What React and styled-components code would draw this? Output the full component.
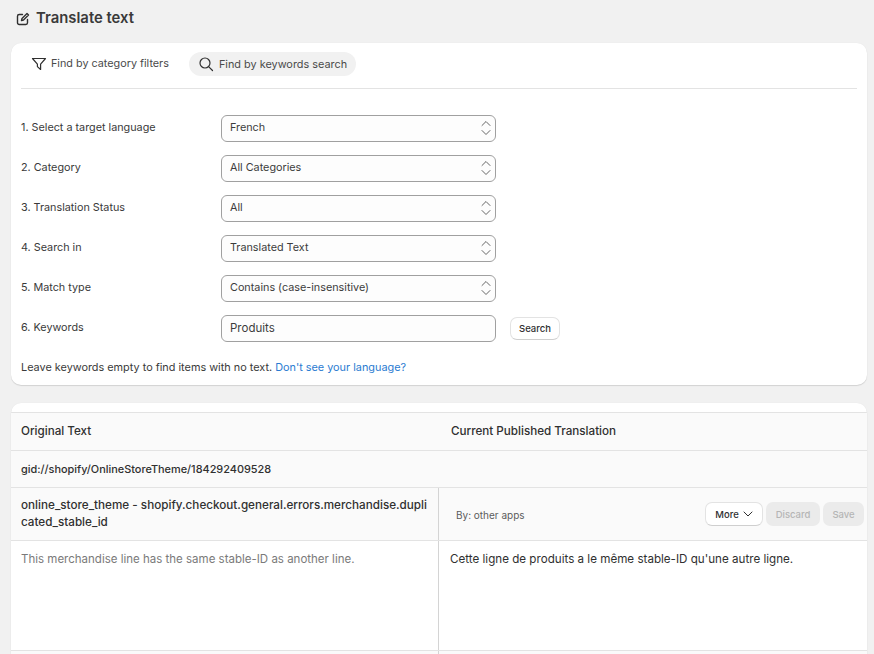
import React from "react";
import styled, { createGlobalStyle } from "styled-components";

const Global = createGlobalStyle`
  html, body { margin: 0; padding: 0; background: #f1f1f1; }
  body { width: 874px; height: 654px; overflow: hidden; font-family: Inter, "Liberation Sans", sans-serif; color: #303030; font-size: 10.8px; }
  * { box-sizing: border-box; }
`;
const Page = styled.div`
  padding: 0 7px 0 11px;
  height: 654px;
  overflow: hidden;
`;
const TitleRow = styled.div`
  height: 43px;
  padding: 5px 0 0 5px;
  display: flex;
  align-items: flex-start;
  gap: 6px;
`;
const TitleIcon = styled.svg`
  width: 14px;
  height: 14px;
  margin-top: 7px;
  flex: none;
`;
const Title = styled.h1`
  margin: 0;
  font-size: 14.85px;
  line-height: 26px;
  font-weight: 600;
  color: #3a3a3a;
`;
const Card = styled.section`
  background: #fff;
  border-radius: 10px;
  box-shadow: 0 1px 1px rgba(0,0,0,.12), 0 0 1px rgba(0,0,0,.08);
`;
const FilterCard = styled(Card)`
  height: 342px;
  padding: 9px 10px 0;
`;
const Tabs = styled.div`
  display: flex;
  align-items: center;
  gap: 10px;
  height: 24px;
`;
const Tab = styled.div`
  display: flex;
  align-items: center;
  gap: ${p => (p.$active ? 5 : 4)}px;
  height: 24px;
  padding: 0 ${p => (p.$active ? 9 : 10)}px 1px;
  border-radius: 12px;
  font-size: ${p => (p.$active ? 10.88 : 10.8)}px;
  color: #4a4a4a;
  background: ${p => (p.$active ? "#f1f1f1" : "transparent")};
`;
const TabIcon = styled.svg`
  width: 16px;
  height: 16px;
  flex: none;
`;
const Divider = styled.hr`
  margin: 12px 0 0;
  width: 836px;
  border: 0;
  border-top: 1px solid #e3e3e3;
`;
const Form = styled.div`
  margin-top: 25px;
  display: flex;
  flex-direction: column;
  gap: 12px;
`;
const Row = styled.div`
  display: flex;
  align-items: center;
  height: 28px;
`;
const Label = styled.div`
  width: 200px;
  padding-bottom: 2px;
  font-size: 10.8px;
  color: #3a3a3a;
`;
const Control = styled.div`
  width: 275px;
  height: 27px;
  border: 1px solid #a0a0a0;
  border-radius: 6px;
  background: #fdfdfd;
  padding: 0 8px 2px;
  display: flex;
  align-items: center;
  justify-content: space-between;
  font-size: 10.8px;
  color: #3c3c3c;
`;
const TextValue = styled(Control)`
  font-size: 11.5px;
  padding-bottom: 0;
`;
const Chevrons = styled.svg`
  width: 12px;
  height: 16px;
  margin: 2px -5px 0 0;
  flex: none;
`;
const SearchButton = styled.button`
  margin-left: 14px;
  width: 50px;
  height: 23px;
  border: 1px solid #e3e3e3;
  border-bottom-color: #cfcfcf;
  border-radius: 7px;
  background: #fff;
  font: 500 9.5px Inter, "Liberation Sans", sans-serif;
  color: #303030;
  padding: 0;
`;
const Help = styled.p`
  margin: 18px 0 0;
  font-size: 10.87px;
  color: #3a3a3a;
`;
const HelpLink = styled.a`
  color: #2a7bd1;
`;
const TableCard = styled(Card)`
  margin-top: 18px;
  padding-top: 9px;
  border-radius: 10px 10px 0 0;
  overflow: hidden;
`;
const GridRow = styled.div`
  display: grid;
  grid-template-columns: 427px 1fr;
  border-top: 1px solid #e3e3e3;
  height: ${p => p.$h}px;
  background: ${p => (p.$white ? "#fff" : "#fafafa")};
`;
const Cell = styled.div`
  padding: 0 10px;
  display: flex;
  align-items: center;
  min-width: 0;
  font-size: 10.9px;
  font-weight: 500;
  color: #303030;
`;
const SpanCell = styled(Cell)`
  grid-column: 1 / -1;
`;
const HeaderCell = styled(Cell)`
  padding: 0 10px 2px ${p => p.$pl ?? 10}px;
  font-size: 11.65px;
`;
const KeyCell = styled(Cell)`
  word-break: break-all;
  line-height: 17px;
  font-size: 11.7px;
  padding-right: 8px;
`;
const ActionCell = styled.div`
  border-left: 1px solid #d4d4d4;
  display: flex;
  align-items: center;
  justify-content: space-between;
  padding: 0 3px 0 17px;
`;
const ByLine = styled.span`
  font-size: 10px;
  color: #5c5c5c;
  margin-top: 1px;
`;
const Actions = styled.div`
  display: flex;
  gap: 3px;
`;
const MoreButton = styled.button`
  width: 58px;
  height: 24px;
  padding: 0;
  border: 1px solid #e3e3e3;
  border-bottom-color: #cfcfcf;
  border-radius: 7px;
  background: #fff;
  font: 500 9.5px Inter, "Liberation Sans", sans-serif;
  color: #303030;
  display: flex;
  align-items: center;
  justify-content: center;
  gap: 4px;
`;
const DisabledButton = styled.button`
  width: ${p => p.$w}px;
  height: 24px;
  padding: 0;
  border: 0;
  border-radius: 7px;
  background: #ebebeb;
  font: 500 9.5px Inter, "Liberation Sans", sans-serif;
  color: #b5b5b5;
`;
const SourceText = styled.div`
  padding: 11px 10px;
  font-size: 11.5px;
  color: #7a7a7a;
`;
const TargetText = styled.div`
  border-left: 1px solid #d4d4d4;
  padding: 11px 11px;
  font-size: 11.63px;
  color: #303030;
`;

const Updown = () => (
  <Chevrons viewBox="0 0 12 16" fill="none" stroke="#666" strokeWidth="1" strokeLinecap="round" strokeLinejoin="round">
    <path d="M2 5.5 6 1.5l4 4" />
    <path d="M2 10.5 6 14.5l4-4" />
  </Chevrons>
);

const selects = [
  ["1. Select a target language", "French"],
  ["2. Category", "All Categories"],
  ["3. Translation Status", "All"],
  ["4. Search in", "Translated Text"],
  ["5. Match type", "Contains (case-insensitive)"],
];

export default function App() {
  return (
    <Page>
      <Global />
      <TitleRow>
        <TitleIcon viewBox="0 0 14 14" fill="none" stroke="#303030" strokeWidth="1.4" strokeLinecap="round" strokeLinejoin="round">
          <path d="M6.5 2.5H3.2A1.7 1.7 0 0 0 1.5 4.2v6.6a1.7 1.7 0 0 0 1.7 1.7h6.6a1.7 1.7 0 0 0 1.7-1.7V7.5" />
          <path d="M11 1.5 12.5 3 7.5 8l-2 .5.5-2z" />
        </TitleIcon>
        <Title>Translate text</Title>
      </TitleRow>

      <FilterCard>
        <Tabs>
          <Tab>
            <TabIcon viewBox="0 0 16 16" fill="none" stroke="#303030" strokeWidth="1.2" strokeLinejoin="round">
              <path d="M1.5 2.5h13L9.6 8.2v5.3L6.4 10.6V8.2z" />
            </TabIcon>
            Find by category filters
          </Tab>
          <Tab $active>
            <TabIcon viewBox="0 0 16 16" fill="none" stroke="#303030" strokeWidth="1.2" strokeLinecap="round">
              <circle cx="7" cy="7" r="5" />
              <path d="m10.6 10.6 3.9 3.9" />
            </TabIcon>
            Find by keywords search
          </Tab>
        </Tabs>
        <Divider />
        <Form>
          {selects.map(([label, value]) => (
            <Row key={label}>
              <Label>{label}</Label>
              <Control>
                {value}
                <Updown />
              </Control>
            </Row>
          ))}
          <Row>
            <Label>6. Keywords</Label>
            <TextValue>Produits</TextValue>
            <SearchButton>Search</SearchButton>
          </Row>
        </Form>
        <Help>
          Leave keywords empty to find items with no text. <HelpLink>Don't see your language?</HelpLink>
        </Help>
      </FilterCard>

      <TableCard>
        <GridRow $h={38}>
          <HeaderCell>Original Text</HeaderCell>
          <HeaderCell $pl={13}>Current Published Translation</HeaderCell>
        </GridRow>
        <GridRow $h={37}>
          <SpanCell>gid://shopify/OnlineStoreTheme/184292409528</SpanCell>
        </GridRow>
        <GridRow $h={53}>
          <KeyCell>online_store_theme - shopify.checkout.general.errors.merchandise.duplicated_stable_id</KeyCell>
          <ActionCell>
            <ByLine>By: other apps</ByLine>
            <Actions>
              <MoreButton>
                More
                <svg width="10" height="10" viewBox="0 0 10 10" fill="none" stroke="#303030" strokeWidth="1" strokeLinecap="round" strokeLinejoin="round">
                  <path d="M1 3l4 4 4-4" />
                </svg>
              </MoreButton>
              <DisabledButton $w={54}>Discard</DisabledButton>
              <DisabledButton $w={41}>Save</DisabledButton>
            </Actions>
          </ActionCell>
        </GridRow>
        <GridRow $h={110} $white>
          <SourceText>This merchandise line has the same stable-ID as another line.</SourceText>
          <TargetText>Cette ligne de produits a le même stable-ID qu'une autre ligne.</TargetText>
        </GridRow>
        <GridRow $h={20}>
          <div />
          <ActionCell />
        </GridRow>
      </TableCard>
    </Page>
  );
}
